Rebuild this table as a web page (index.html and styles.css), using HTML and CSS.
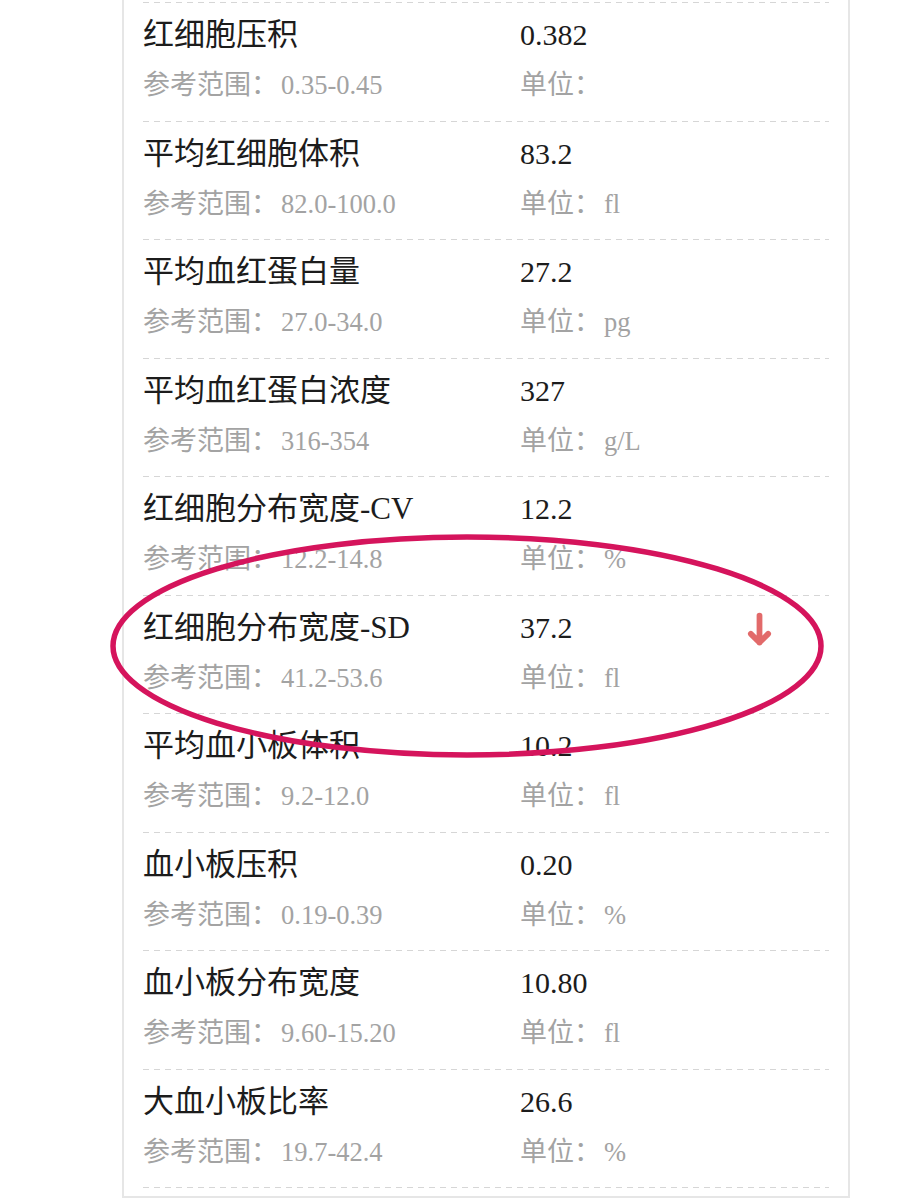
FILE: index.html
```html
<!DOCTYPE html>
<html lang="zh-CN">
<head>
<meta charset="utf-8">
<title>血常规</title>
<link rel="stylesheet" href="styles.css">
</head>
<body>
<div class="card">
  <div class="list">
    <div class="row"><div class="name">红细胞压积</div><div class="val">0.382</div><div class="flag"></div><div class="ref">参考范围：<span class="num">0.35-0.45</span></div><div class="unit">单位：</div></div>
    <div class="row"><div class="name">平均红细胞体积</div><div class="val">83.2</div><div class="flag"></div><div class="ref">参考范围：<span class="num">82.0-100.0</span></div><div class="unit">单位：<span class="num">fl</span></div></div>
    <div class="row"><div class="name">平均血红蛋白量</div><div class="val">27.2</div><div class="flag"></div><div class="ref">参考范围：<span class="num">27.0-34.0</span></div><div class="unit">单位：<span class="num">pg</span></div></div>
    <div class="row"><div class="name">平均血红蛋白浓度</div><div class="val">327</div><div class="flag"></div><div class="ref">参考范围：<span class="num">316-354</span></div><div class="unit">单位：<span class="num">g/L</span></div></div>
    <div class="row"><div class="name">红细胞分布宽度-CV</div><div class="val">12.2</div><div class="flag"></div><div class="ref">参考范围：<span class="num">12.2-14.8</span></div><div class="unit">单位：<span class="num">%</span></div></div>
    <div class="row"><div class="name">红细胞分布宽度-SD</div><div class="val">37.2</div><div class="flag"><svg class="arrow" viewBox="0 0 26 36" width="26" height="36"><path d="M13 3 V31 M4 22 L13 31 L22 22" fill="none" stroke="#e26a6a" stroke-width="6" stroke-linecap="round" stroke-linejoin="round"/></svg></div><div class="ref">参考范围：<span class="num">41.2-53.6</span></div><div class="unit">单位：<span class="num">fl</span></div></div>
    <div class="row"><div class="name">平均血小板体积</div><div class="val">10.2</div><div class="flag"></div><div class="ref">参考范围：<span class="num">9.2-12.0</span></div><div class="unit">单位：<span class="num">fl</span></div></div>
    <div class="row"><div class="name">血小板压积</div><div class="val">0.20</div><div class="flag"></div><div class="ref">参考范围：<span class="num">0.19-0.39</span></div><div class="unit">单位：<span class="num">%</span></div></div>
    <div class="row"><div class="name">血小板分布宽度</div><div class="val">10.80</div><div class="flag"></div><div class="ref">参考范围：<span class="num">9.60-15.20</span></div><div class="unit">单位：<span class="num">fl</span></div></div>
    <div class="row"><div class="name">大血小板比率</div><div class="val">26.6</div><div class="flag"></div><div class="ref">参考范围：<span class="num">19.7-42.4</span></div><div class="unit">单位：<span class="num">%</span></div></div>
  </div>
</div>
<svg class="mark" width="900" height="1200" viewBox="0 0 900 1200">
  <ellipse cx="467" cy="646" rx="354" ry="109" fill="none" stroke="#d5145c" stroke-width="5.5"/>
</svg>
</body>
</html>
```
FILE: styles.css
```css
html, body {
  margin: 0;
  padding: 0;
  background: #ffffff;
}
body {
  position: relative;
  width: 900px;
  height: 1200px;
  overflow: hidden;
  font-family: "Liberation Serif", "Noto Sans CJK SC", serif;
}
.card {
  margin-left: 122px;
  width: 686px;
  border: 2px solid #e6e6e6;
  border-top: none;
  padding: 2px 19px 8px 19px;
  background: #fff;
}
.list {
  background-image: repeating-linear-gradient(to right, #d6d6d6 0 6px, transparent 6px 11px);
  background-size: 100% 1px;
  background-repeat: no-repeat;
  background-position: left bottom;
  padding-bottom: 1px;
}
.row {
  display: grid;
  grid-template-columns: 377px 227px 25px;
  grid-template-rows: 40px 40px;
  row-gap: 10px;
  height: 118.5px;
  box-sizing: border-box;
  padding-top: 12px;
  background-image: repeating-linear-gradient(to right, #d6d6d6 0 6px, transparent 6px 11px);
  background-size: 100% 1px;
  background-repeat: no-repeat;
  background-position: left top;
  border-top: 1px solid transparent;
  background-origin: border-box;
}
.name, .val {
  font-size: 30px;
  line-height: 40px;
  color: #1c1c1c;
  white-space: nowrap;
}
.name {
  font-size: 31px;
}
.ref, .unit {
  font-size: 27px;
  line-height: 40px;
  color: #a3a3a3;
  white-space: nowrap;
}
.num {
  margin-left: 3px;
  font-size: 26.5px;
}
.ref { grid-column: 1; grid-row: 2; }
.unit { grid-column: 2 / span 2; grid-row: 2; }
.flag {
  display: flex;
  align-items: center;
  justify-content: center;
}
.arrow {
  display: block;
  margin-top: 4px;
}
.mark {
  position: absolute;
  left: 0;
  top: 0;
  pointer-events: none;
}
```
